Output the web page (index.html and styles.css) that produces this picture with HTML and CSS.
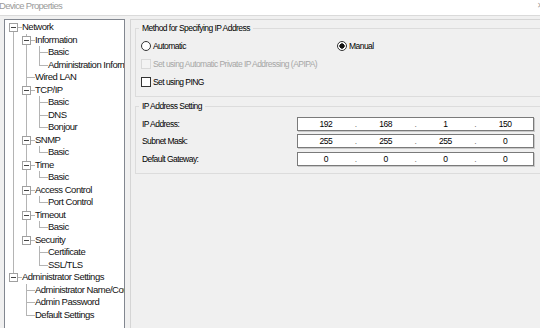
FILE: index.html
```html
<!DOCTYPE html>
<html lang="en">
<head>
  <meta charset="UTF-8">
  <meta name="viewport" content="width=device-width, initial-scale=1.0">
  <title>Device Properties</title>
  <link rel="stylesheet" href="styles.css">
</head>
<body>
  <div class="titlebar">
    <span class="title">Device Properties</span>
    <span class="close">&#x2715;</span>
  </div>
  <div class="content">

    <div class="tree">
      <div class="row"><i class="c rt"><b></b></i><span class="lbl">Network</span></div>
      <div class="row"><i class="c v"></i><i class="c t"><b></b></i><span class="lbl">Information</span></div>
      <div class="row"><i class="c v"></i><i class="c v"></i><i class="c t"></i><span class="lbl">Basic</span></div>
      <div class="row"><i class="c v"></i><i class="c v"></i><i class="c l"></i><span class="lbl">Administration Information</span></div>
      <div class="row"><i class="c v"></i><i class="c t"></i><span class="lbl">Wired LAN</span></div>
      <div class="row"><i class="c v"></i><i class="c t"><b></b></i><span class="lbl">TCP/IP</span></div>
      <div class="row"><i class="c v"></i><i class="c v"></i><i class="c t"></i><span class="lbl">Basic</span></div>
      <div class="row"><i class="c v"></i><i class="c v"></i><i class="c t"></i><span class="lbl">DNS</span></div>
      <div class="row"><i class="c v"></i><i class="c v"></i><i class="c l"></i><span class="lbl">Bonjour</span></div>
      <div class="row"><i class="c v"></i><i class="c t"><b></b></i><span class="lbl">SNMP</span></div>
      <div class="row"><i class="c v"></i><i class="c v"></i><i class="c l"></i><span class="lbl">Basic</span></div>
      <div class="row"><i class="c v"></i><i class="c t"><b></b></i><span class="lbl">Time</span></div>
      <div class="row"><i class="c v"></i><i class="c v"></i><i class="c l"></i><span class="lbl">Basic</span></div>
      <div class="row"><i class="c v"></i><i class="c t"><b></b></i><span class="lbl">Access Control</span></div>
      <div class="row"><i class="c v"></i><i class="c v"></i><i class="c l"></i><span class="lbl">Port Control</span></div>
      <div class="row"><i class="c v"></i><i class="c t"><b></b></i><span class="lbl">Timeout</span></div>
      <div class="row"><i class="c v"></i><i class="c v"></i><i class="c l"></i><span class="lbl">Basic</span></div>
      <div class="row"><i class="c v"></i><i class="c l"><b></b></i><span class="lbl">Security</span></div>
      <div class="row"><i class="c v"></i><i class="c e"></i><i class="c t"></i><span class="lbl">Certificate</span></div>
      <div class="row"><i class="c v"></i><i class="c e"></i><i class="c l"></i><span class="lbl">SSL/TLS</span></div>
      <div class="row"><i class="c l"><b></b></i><span class="lbl">Administrator Settings</span></div>
      <div class="row"><i class="c e"></i><i class="c t"></i><span class="lbl">Administrator Name/Comment</span></div>
      <div class="row"><i class="c e"></i><i class="c t"></i><span class="lbl">Admin Password</span></div>
      <div class="row"><i class="c e"></i><i class="c l"></i><span class="lbl">Default Settings</span></div>
    </div>

    <div class="page">
      <fieldset class="group method">
        <legend>Method for Specifying IP Address</legend>
        <div class="opt-row">
          <label class="opt"><input type="radio" name="method">Automatic</label>
          <label class="opt"><input type="radio" name="method" checked>Manual</label>
        </div>
        <label class="opt disabled"><input type="checkbox" disabled>Set using Automatic Private IP Addressing (APIPA)</label>
        <label class="opt"><input type="checkbox">Set using PING</label>
      </fieldset>

      <fieldset class="group ip-group">
        <legend>IP Address Setting</legend>
        <div class="ip-row">
          <span>IP Address:</span>
          <div class="ip"><span>192</span><i>.</i><span>168</span><i>.</i><span>1</span><i>.</i><span>150</span></div>
        </div>
        <div class="ip-row">
          <span>Subnet Mask:</span>
          <div class="ip"><span>255</span><i>.</i><span>255</span><i>.</i><span>255</span><i>.</i><span>0</span></div>
        </div>
        <div class="ip-row">
          <span>Default Gateway:</span>
          <div class="ip"><span>0</span><i>.</i><span>0</span><i>.</i><span>0</span><i>.</i><span>0</span></div>
        </div>
      </fieldset>
    </div>

  </div>
</body>
</html>
```

FILE: styles.css
```css
* {
  box-sizing: border-box;
}
body {
  margin: 0;
  background: #f0f0f0;
  overflow: hidden;
  font-family: "Liberation Sans", Arial, sans-serif;
  color: #000;
}

.titlebar {
  height: 16px;
  background: #fff;
  border-bottom: 1px solid #dadada;
  display: flex;
  justify-content: space-between;
  align-items: center;
}
.title {
  font-size: 9.5px;
  letter-spacing: -0.7px;
  line-height: 10px;
  color: #9b9b9b;
  margin-left: -1px;
  margin-top: -3px;
}
.close {
  font-size: 8px;
  color: #a0a0a0;
  margin-right: -4px;
  margin-top: -4px;
}

.content {
  display: flex;
  gap: 5px;
  width: 560px;
  height: 330px;
  padding: 3px 0 0 4px;
}

/* tree */
.tree {
  width: 121px;
  flex: none;
  background: #fff;
  border: 1px solid #828790;
  padding: 1px 0 0 2px;
  overflow: hidden;
  font-size: 9.5px;
  letter-spacing: -0.5px;
  color: #111;
}
.row {
  display: flex;
  height: 12.5px;
  align-items: center;
  white-space: nowrap;
}
.lbl {
  padding-left: 2px;
  line-height: 12px;
}
.c {
  position: relative;
  width: 13px;
  height: 100%;
  flex: none;
}
.c::before,
.c::after {
  content: "";
  position: absolute;
  background: #b4b4b4;
}
.c::before {
  left: 6px;
  width: 1px;
  top: 0;
  bottom: 0;
}
.c::after {
  left: 6px;
  right: -2px;
  top: 6px;
  height: 1px;
}
.c.v::after { display: none; }
.c.e::before,
.c.e::after { display: none; }
.c.rt::before { top: 6px; }
.c.l::before { bottom: auto; height: 7px; }
.c b {
  position: absolute;
  left: 2px;
  top: 2px;
  width: 9px;
  height: 9px;
  border: 1px solid #a0a0a0;
  background: #fff;
  z-index: 1;
}
.c b::after {
  content: "";
  position: absolute;
  left: 1px;
  top: 3px;
  width: 5px;
  height: 1px;
  background: #444;
}

/* right page */
.page {
  flex: 1;
  border: 1px solid #d5d5d5;
  padding: 3px 0 0 4px;
}
.group {
  margin: 0;
  border: 1px solid #dcdcdc;
  padding: 4px 5px 5px;
  font-size: 8.5px;
  letter-spacing: -0.55px;
}
.group legend {
  padding: 0 3px;
  margin-left: -2px;
  line-height: 10px;
}
.ip-group {
  margin-top: 4px;
  padding: 4px 6px 5px;
}
.ip-group legend {
  margin-left: -3px;
}

.opt-row {
  display: grid;
  grid-template-columns: 196px auto;
}
.opt {
  display: flex;
  align-items: center;
  gap: 2px;
  height: 18px;
}
.opt input {
  appearance: none;
  margin: 0;
  width: 10px;
  height: 10px;
  border: 1px solid #333;
  background: #fff;
}
.opt input[type="radio"] {
  border-radius: 50%;
}
.opt input[type="radio"]:checked {
  background: radial-gradient(circle, #111 0 2.4px, #fff 2.9px);
}
.opt.disabled {
  color: #a6a6a6;
}
.opt.disabled input {
  border-color: #d9d9d9;
  background: #f3f3f3;
}

.ip-row {
  display: grid;
  grid-template-columns: 155px 237px;
  align-items: center;
  height: 17.5px;
}
.ip {
  display: flex;
  height: 14px;
  background: #fff;
  border: 1px solid #7a7a7a;
  box-shadow: 1px 1px 0 #c9c9c9;
}
.ip span {
  flex: 1;
  text-align: center;
  line-height: 12px;
}
.ip i {
  width: 4px;
  font-style: normal;
  text-align: center;
  line-height: 12px;
  color: #777;
}
```
